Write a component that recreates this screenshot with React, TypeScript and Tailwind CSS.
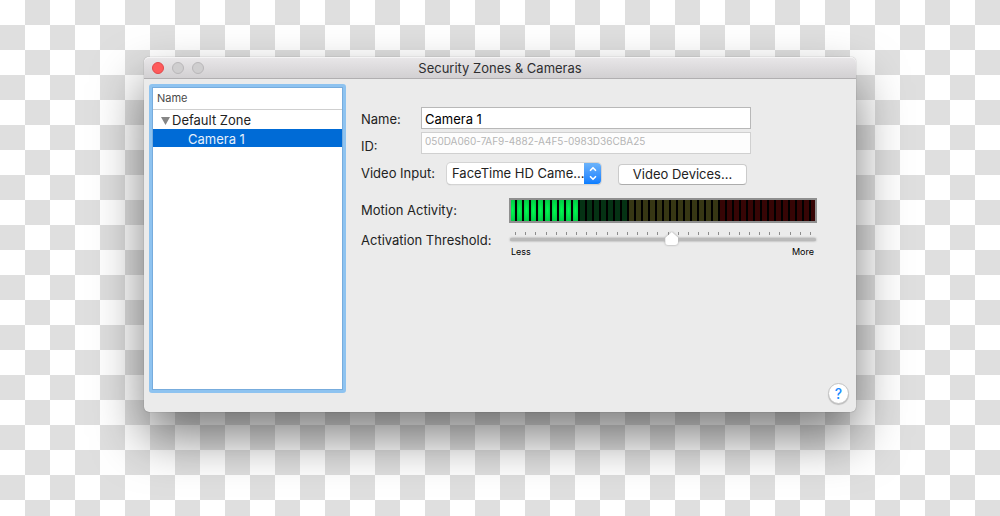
import React, { useState } from 'react';
import { ChevronDown, ChevronUp } from 'lucide-react';

const SEGMENTS = 44;
const LEVEL = 10;
const TICKS = 30;

const segmentColor = (idx: number) => {
  if (idx < LEVEL) return 'bg-radial-[ellipse_at_center] from-[#00fa50] to-[#00be41]';
  if (idx < 17) return 'bg-[#053214]';
  if (idx < 30) return 'bg-[#373714]';
  return 'bg-[#370505]';
};

const TitleBar: React.FC = () => (
  <header className="relative flex h-[22px] items-center justify-center rounded-t-[5px] border-b border-[#b1afb1] bg-linear-to-b from-[#e9e7e9] to-[#d2d0d2] shadow-[inset_0_1px_0_#f5f4f5]">
    <div className="absolute left-2 flex gap-2">
      <button aria-label="Close" className="size-3 rounded-full border border-[#e2474a] bg-[#fe5b5b]" />
      <button aria-label="Minimize" className="size-3 rounded-full border border-[#b9b7b9] bg-[#cfcecf]" />
      <button aria-label="Zoom" className="size-3 rounded-full border border-[#b9b7b9] bg-[#cfcecf]" />
    </div>
    <h1 className="text-[13px] leading-4 text-[#2e2e30]">Security Zones &amp; Cameras</h1>
  </header>
);

const ZoneList: React.FC = () => (
  <aside className="w-[197px] shrink-0 rounded-[3px] border-3 border-[#8ec3f0]">
    <div className="h-full min-h-[303px] border border-[#77acdd] bg-white">
      <div className="h-[22px] border-b border-[#cfcfcf] pl-1 text-[11px] leading-[21px] text-[#4a4a4a]">Name</div>
      <ul className="text-[13px]">
        <li>
          <button className="flex h-[19px] w-full items-center gap-0.5 pt-0.5 pl-2 text-left">
            <svg viewBox="0 0 9 8" className="h-2 w-[9px]" aria-hidden="true">
              <path d="M0 0h9L4.5 8z" fill="#868686" />
            </svg>
            Default Zone
          </button>
          <ul>
            <li>
              <button className="block h-[18px] w-full bg-[#006bd6] pl-[35px] text-left leading-5 text-[#e4effb]">Camera 1</button>
            </li>
          </ul>
        </li>
      </ul>
    </div>
  </aside>
);

const MotionMeter: React.FC = () => (
  <div
    role="meter"
    aria-labelledby="motion-label"
    aria-valuenow={LEVEL}
    aria-valuemin={0}
    aria-valuemax={SEGMENTS}
    className="h-[25px] max-w-[308px] flex-1 border-2 border-[#8f8f8f] bg-black"
  >
    <div className="h-full overflow-hidden">
      <div className="-mx-px flex h-full gap-0.5">
        {Array.from({ length: SEGMENTS }, (_, idx) => (
          <span key={idx} className={`flex-1 ${segmentColor(idx)}`} />
        ))}
      </div>
    </div>
  </div>
);

const App: React.FC = () => {
  const [name, setName] = useState('Camera 1');
  const [threshold, setThreshold] = useState(53);

  return (
    <div className="min-h-screen bg-[repeating-conic-gradient(#dfdfdf_0_25%,#fff_0_50%)] bg-size-[50px_50px] px-36 pt-[57px] font-['Inter','Liberation_Sans',sans-serif] text-[13px] text-[#222]">
      <main className="rounded-[5px] bg-[#ebebeb] shadow-[0_0_1px_rgba(0,0,0,0.5),0_25px_50px_rgba(0,0,0,0.5)]">
        <TitleBar />
        <div className="flex pt-[5px] pr-[7px] pb-2 pl-[5px]">
          <div className="mb-[11px] flex shrink-0">
            <ZoneList />
          </div>

          <form className="flex flex-1 flex-col pt-[23px] pl-[15px]" onSubmit={(e) => e.preventDefault()}>
            <div className="flex h-[22px] items-center">
              <label htmlFor="name" className="w-[60px] pt-1">Name:</label>
              <input
                id="name"
                value={name}
                onChange={(e) => setName(e.target.value)}
                className="h-[22px] max-w-[330px] min-w-0 flex-1 border border-[#b8b8b8] bg-white px-[3px] pt-0.5 text-black outline-none"
              />
            </div>

            <div className="mt-[3px] flex items-end">
              <label htmlFor="id" className="w-[60px] leading-4">ID:</label>
              <input
                id="id"
                readOnly
                value="050DA060-7AF9-4882-A4F5-0983D36CBA25"
                className="h-[22px] max-w-[330px] min-w-0 flex-1 border border-[#d0d0d0] bg-[#fdfdfd] px-[3px] pb-1 text-[10px] text-[#b5b5b5] outline-none"
              />
            </div>

            <div className="mt-[9px] flex h-[22px] items-center">
              <label htmlFor="input" className="w-[86px] whitespace-nowrap">Video Input:</label>
              <div className="relative w-[154px] self-start">
                <select
                  id="input"
                  className="block h-[21px] w-full appearance-none rounded-[4px] bg-white pl-[5px] text-[#222] shadow-[0_0_0_1px_#d4d4d4,0_1px_1px_#a8a8a8] outline-none"
                >
                  <option>FaceTime HD Came...</option>
                </select>
                <span className="pointer-events-none absolute inset-y-0 right-0 flex w-[17px] flex-col items-center justify-center rounded-r-[4px] bg-linear-to-b from-[#6bb3fa] to-[#067dff] text-white">
                  <ChevronUp size={10} strokeWidth={4} className="-mb-px" />
                  <ChevronDown size={10} strokeWidth={4} />
                </span>
              </div>
              <button
                type="button"
                className="ml-[17px] h-[21px] w-[129px] self-end rounded-[4px] border border-[#cbcbcb] border-b-[#acacac] bg-white pb-0.5 leading-4"
              >
                Video Devices...
              </button>
            </div>

            <div className="mt-[13px] flex items-center">
              <span id="motion-label" className="w-[148px]">Motion Activity:</span>
              <MotionMeter />
            </div>

            <div className="mt-[7px] flex">
              <label htmlFor="threshold" className="w-[149px] leading-5 whitespace-nowrap">Activation Threshold:</label>
              <div className="max-w-[306px] flex-1 pt-0.5">
                <div className="flex h-[3px] justify-between px-[5px]">
                  {Array.from({ length: TICKS }, (_, idx) => (
                    <span key={idx} className="w-px bg-[#8c8c8c]" />
                  ))}
                </div>
                <input
                  id="threshold"
                  type="range"
                  value={threshold}
                  onChange={(e) => setThreshold(Number(e.target.value))}
                  className="-mt-0.5 block h-[13px] w-full appearance-none bg-transparent drop-shadow-[0_0_1px_rgba(0,0,0,0.35)] [&::-webkit-slider-runnable-track]:h-[3px] [&::-webkit-slider-runnable-track]:rounded-full [&::-webkit-slider-runnable-track]:bg-[#bababa] [&::-webkit-slider-thumb]:-mt-[6px] [&::-webkit-slider-thumb]:h-[13px] [&::-webkit-slider-thumb]:w-[13px] [&::-webkit-slider-thumb]:appearance-none [&::-webkit-slider-thumb]:rounded-[3px] [&::-webkit-slider-thumb]:bg-white [&::-webkit-slider-thumb]:[clip-path:polygon(50%_0,100%_45%,100%_100%,0_100%,0_45%)]"
                />
                <div className="flex justify-between pr-0.5 pl-px text-[9px] leading-3 text-black">
                  <span>Less</span>
                  <span>More</span>
                </div>
              </div>
            </div>

            <button
              type="button"
              aria-label="Help"
              className="mt-auto flex size-[21px] items-center justify-center self-end rounded-full border border-[#c4c4c4] bg-white text-[14px] font-medium text-[#1a8cff] shadow-[0_1px_1px_rgba(0,0,0,0.2)]"
            >
              ?
            </button>
          </form>
        </div>
      </main>
    </div>
  );
};

export default App;
